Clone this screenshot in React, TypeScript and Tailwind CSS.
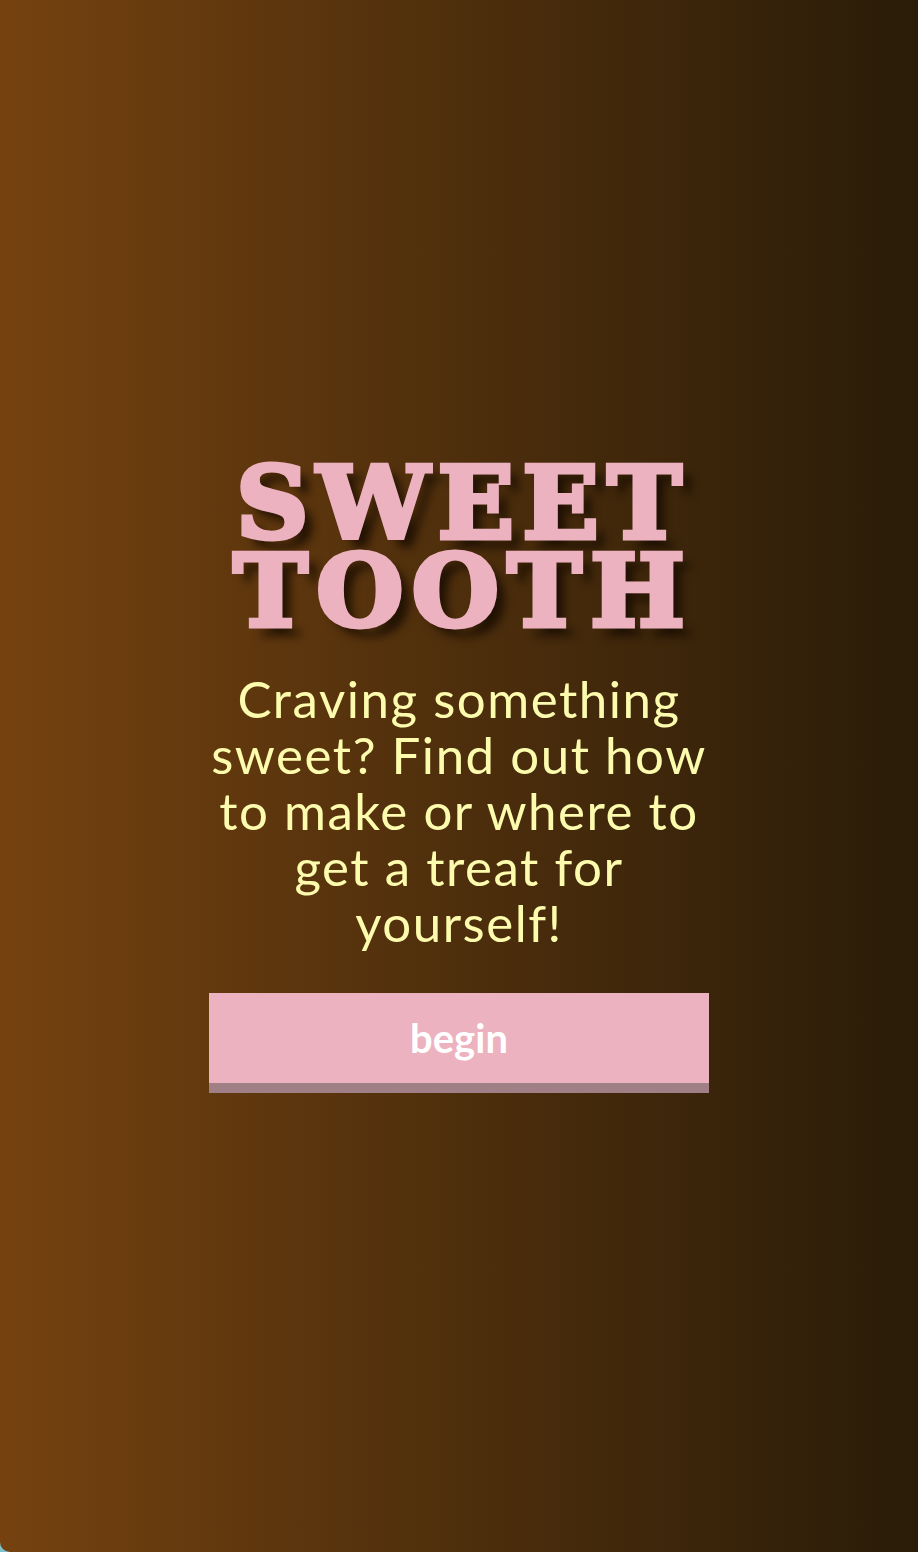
const App = () => {
  return (
    <div className="min-h-screen bg-[#7fc3cc]">
      <main className="min-h-screen flex flex-col items-center justify-center bg-gradient-to-r from-[#75420f] to-[#2a1c08] rounded-bl-[10px]">
        <div className="w-[500px] flex flex-col items-center">
          <h1
            className="text-center text-[#ecb2bf] font-bold text-[100px] leading-[88px] tracking-[0.085em] pl-[0.085em] [-webkit-text-stroke:5px_#ecb2bf] [text-shadow:10px_10px_8px_rgba(20,10,0,0.75)]"
            style={{ fontFamily: '"DejaVu Serif", serif' }}
          >
            SWEET
            <br />
            TOOTH
          </h1>
          <p
            className="mt-[36px] text-center text-[#fdfcae] text-[51px] leading-[56px] tracking-[0.03em]"
            style={{ fontFamily: 'Lato, "Open Sans", sans-serif' }}
          >
            Craving something
            <br />
            sweet? Find out how
            <br />
            to make or where to
            <br />
            get a treat for
            <br />
            yourself!
          </p>
          <button
            className="mt-[42px] w-full h-[100px] bg-[#ecb2bf] border-b-[10px] border-[#a17f87] text-white font-bold text-[40px]"
            style={{ fontFamily: 'Lato, sans-serif' }}
          >
            begin
          </button>
        </div>
      </main>
    </div>
  );
};

export default App;
